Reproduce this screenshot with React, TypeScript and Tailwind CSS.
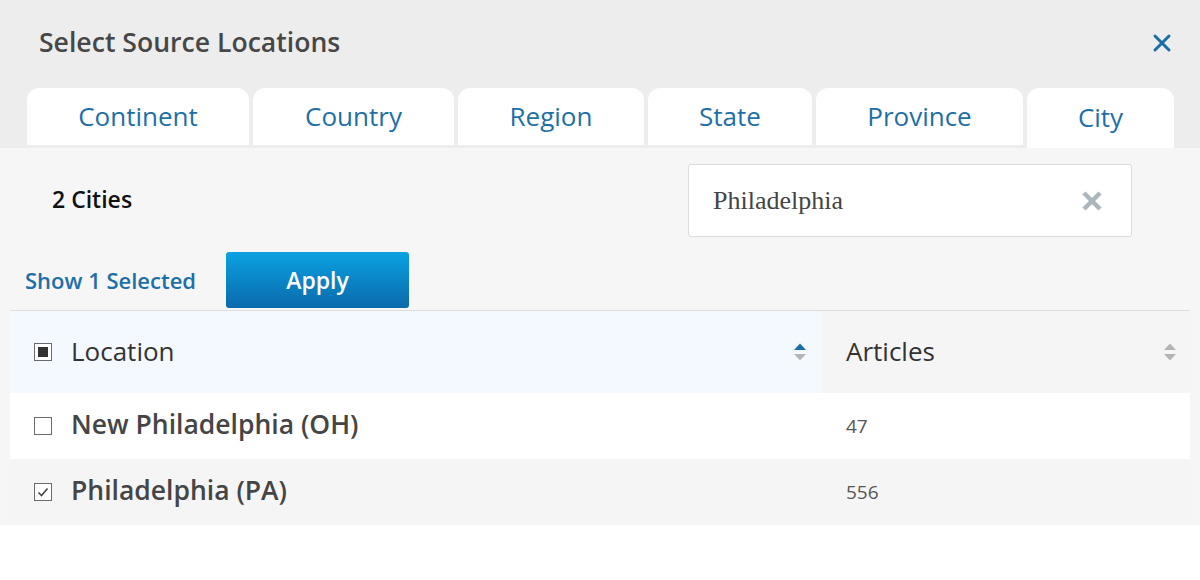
import React from "react";

const sans = { fontFamily: '"Open Sans", "Noto Sans", sans-serif' };

function SortArrows({ active }: { active?: boolean }) {
  return (
    <svg width="14" height="22" viewBox="0 0 14 22" className="shrink-0">
      <polygon points="1,9 13,9 7,2.5" fill={active ? "#1a6fa8" : "#b5b5b5"} />
      <polygon points="1,13 13,13 7,19.5" fill="#b5b5b5" />
    </svg>
  );
}

function Checkbox({ state }: { state: "empty" | "checked" | "mixed" }) {
  return (
    <div className="w-[18px] h-[18px] border border-[#6b6b6b] bg-white flex items-center justify-center shrink-0">
      {state === "mixed" && <div className="w-[10px] h-[10px] bg-[#333]" />}
      {state === "checked" && (
        <svg width="14" height="14" viewBox="0 0 14 14">
          <path d="M2.5 7.5 L5.5 10.5 L11.5 3.5" fill="none" stroke="#444" strokeWidth="1.6" />
        </svg>
      )}
    </div>
  );
}

const tabs = [
  { label: "Continent", w: "w-[222px]" },
  { label: "Country", w: "w-[201px]" },
  { label: "Region", w: "w-[186px]" },
  { label: "State", w: "w-[164px]" },
  { label: "Province", w: "w-[207px]" },
  { label: "City", w: "w-[147px]", active: true },
];

export default function App() {
  return (
    <div className="w-[1200px] h-[580px] bg-white overflow-hidden" style={sans}>
      {/* Header */}
      <div className="bg-[#ededed] h-[148px] flex flex-col">
        <div className="flex items-center justify-between h-[88px] pl-[39px] pr-[28px] pb-[3px]">
          <div className="text-[26.6px] font-semibold text-[#474747] leading-none">Select Source Locations</div>
          <svg width="20" height="20" viewBox="0 0 20 20">
            <path d="M3 3 L17 17 M17 3 L3 17" stroke="#1a6fa8" strokeWidth="3" strokeLinecap="round" />
          </svg>
        </div>
        <div className="flex items-start gap-[4px] pl-[27px] h-[60px]">
          {tabs.map((t) => (
            <div
              key={t.label}
              className={`${t.w} ${t.active ? "h-[60px] pb-[2px]" : "h-[57px]"} bg-white rounded-t-[12px] flex items-center justify-center text-[26px] text-[#1d6fa8]`}
            >
              {t.label}
            </div>
          ))}
        </div>
      </div>

      {/* Content */}
      <div className="bg-[#f6f6f6] px-[10px]">
        <div className="flex items-start justify-between pt-[16px] pr-[58px]">
          <div className="pl-[42px] pt-[24px] text-[23px] font-semibold text-[#111] leading-none">2 Cities</div>
          <div className="w-[444px] h-[73px] bg-white border border-[#dcdcdc] rounded-[3px] flex items-center justify-between pl-[24px] pr-[28px]">
            <span className="text-[26px] text-[#444] pb-[1px]" style={{ fontFamily: '"Liberation Serif", serif' }}>
              Philadelphia
            </span>
            <svg width="22" height="22" viewBox="0 0 22 22">
              <path d="M3 3 L19 19 M19 3 L3 19" stroke="#aab6bc" strokeWidth="4.5" />
            </svg>
          </div>
        </div>
        <div className="flex items-center gap-[30px] pt-[15px] pl-[15px] pb-[2px]">
          <div className="text-[22px] font-semibold text-[#1d6fa8] pt-[1px]">Show 1 Selected</div>
          <div className="w-[183px] h-[56px] rounded-[3px] bg-gradient-to-b from-[#0ba2e2] to-[#0a6aab] flex items-center justify-center text-white text-[23px] font-semibold">
            Apply
          </div>
        </div>
        <div className="border-t border-[#dcdcdc]">
          <div className="flex h-[82px]">
            <div className="w-[812px] bg-[#f3f9fe] flex items-center pl-[24px] pr-[15px]">
              <Checkbox state="mixed" />
              <span className="ml-[19px] text-[26px] text-[#333] flex-1 pb-[1px]">Location</span>
              <SortArrows active />
            </div>
            <div className="flex-1 bg-[#f5f5f5] flex items-center pl-[24px] pr-[13px]">
              <span className="text-[26px] text-[#333] flex-1 pb-[1px]">Articles</span>
              <SortArrows />
            </div>
          </div>
          {[
            { name: "New Philadelphia (OH)", n: "47", bg: "bg-white", s: "empty" as const },
            { name: "Philadelphia (PA)", n: "556", bg: "bg-[#f5f5f5]", s: "checked" as const },
          ].map((r) => (
            <div key={r.name} className={`flex h-[66px] ${r.bg}`}>
              <div className="w-[812px] flex items-center pl-[24px]">
                <Checkbox state={r.s} />
                <span className="ml-[19px] text-[26.5px] font-semibold text-[#454545] pb-[2px]">{r.name}</span>
              </div>
              <div className="flex-1 flex items-center pl-[24px] text-[19px] text-[#555]">{r.n}</div>
            </div>
          ))}
        </div>
      </div>
    </div>
  );
}
